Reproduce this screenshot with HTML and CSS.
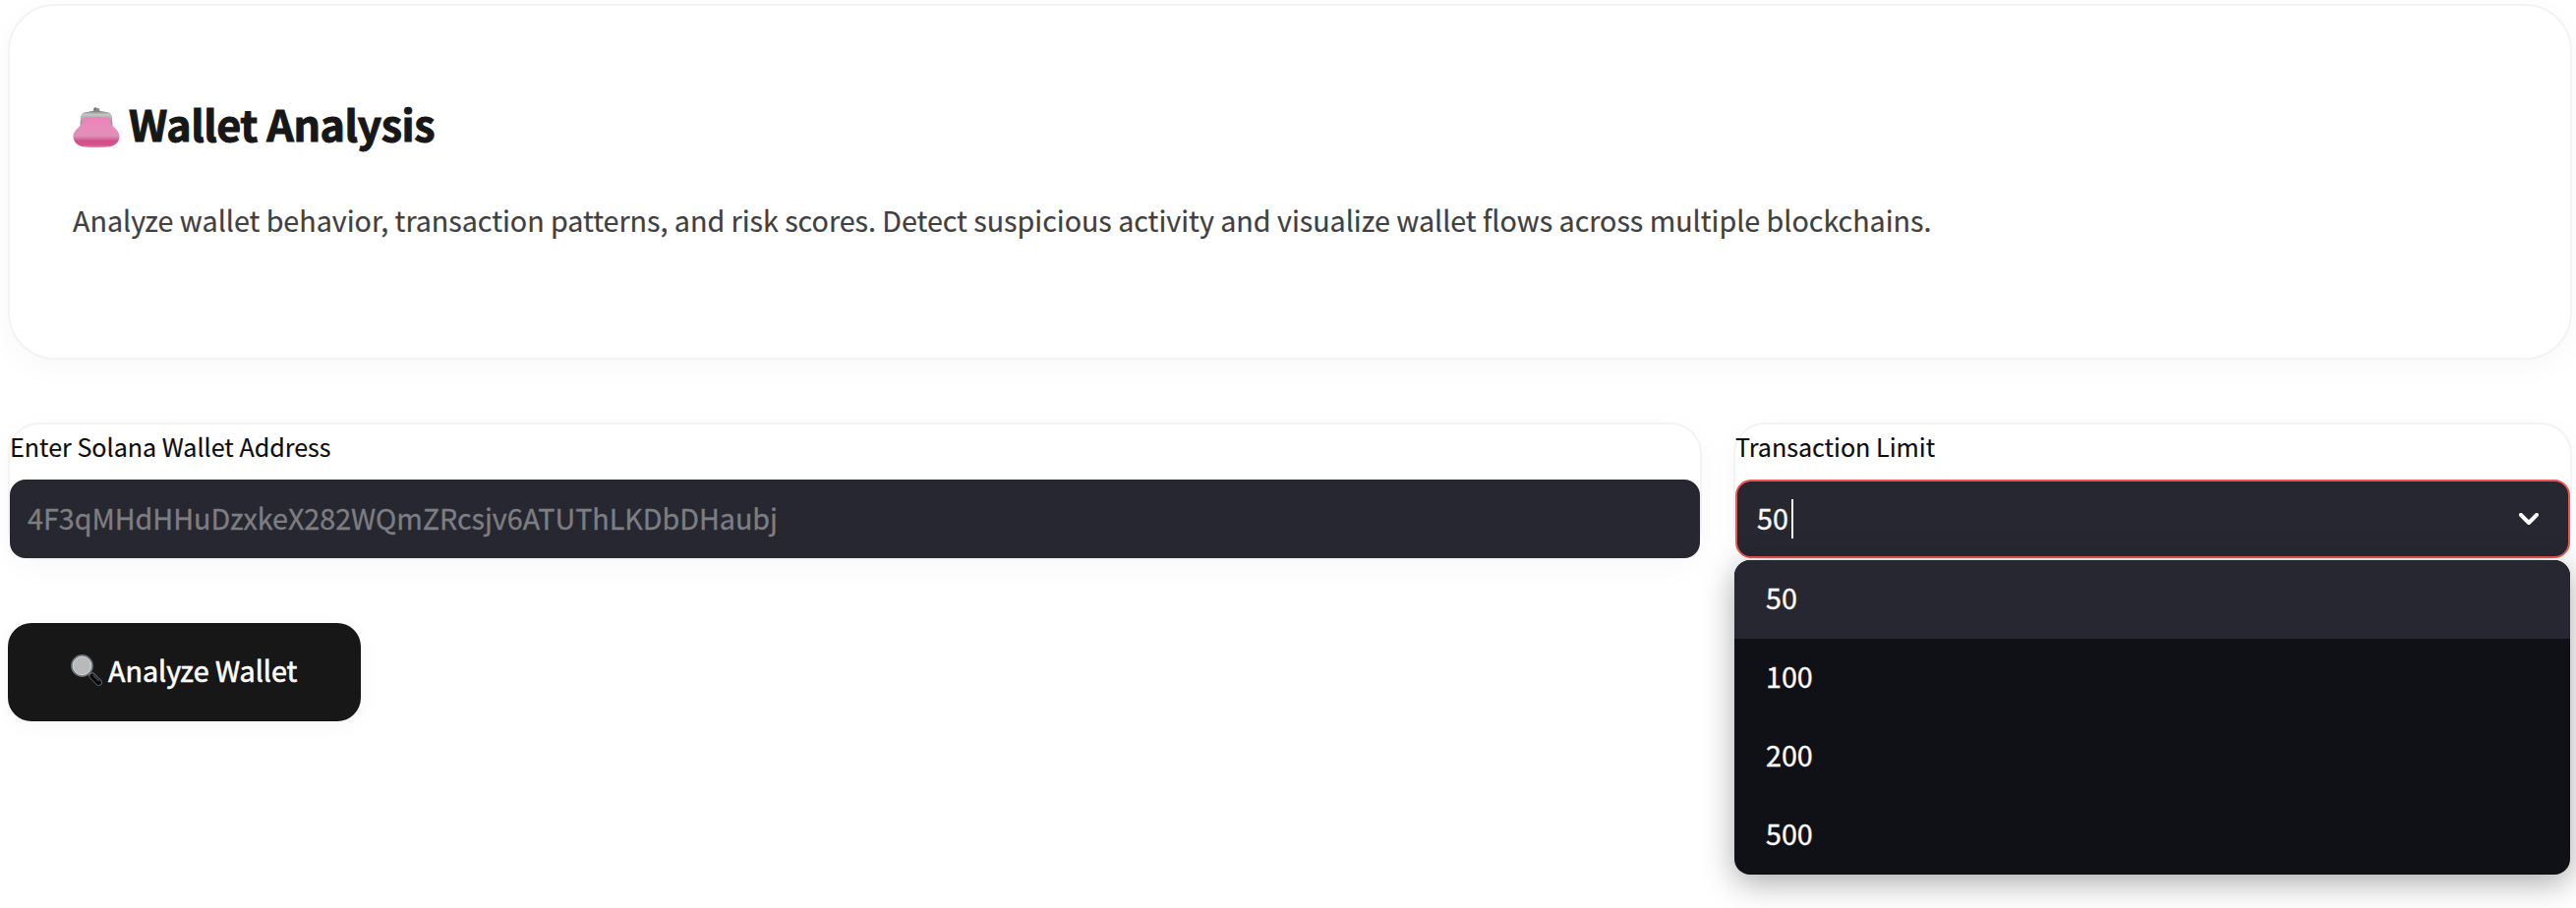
FILE: index.html
```html
<!DOCTYPE html>
<html lang="en">
<head>
<meta charset="utf-8">
<title>Wallet Analysis</title>
<link rel="stylesheet" href="styles.css">
</head>
<body>
<main class="page">
  <section class="card intro">
    <h1 class="title">
      <svg class="purse" viewBox="0 0 48 42" aria-hidden="true">
        <defs>
          <linearGradient id="metal" x1="0" y1="0" x2="0" y2="1">
            <stop offset="0" stop-color="#77777a"/><stop offset=".25" stop-color="#c4c5c5"/><stop offset="1" stop-color="#858688"/>
          </linearGradient>
          <linearGradient id="pink" x1="0" y1="0" x2="0" y2="1">
            <stop offset="0" stop-color="#f07fba"/><stop offset=".3" stop-color="#e98bba"/><stop offset=".62" stop-color="#df8fb7"/><stop offset=".78" stop-color="#cf4f87"/><stop offset=".93" stop-color="#d95590"/><stop offset="1" stop-color="#e9a3c3"/>
          </linearGradient>
        </defs>
        <path d="M7.500 19 8 10Q8.500 6 13 5.200L22 3.600 26 3.600 35 5.200Q39.500 6 40 10L40.500 19Z" fill="url(#metal)"/>
        <circle cx="23" cy="2.200" r="1.900" fill="#747477"/><circle cx="25.500" cy="3" r="1.900" fill="#8a8a8c"/>
        <path d="M11 10.500Q24 9.500 37.500 10.500C38 17 40 18.500 43 21.500 46 24.500 48 27 47.500 31 46.500 36 43 39.500 37 40.500 28 41.500 20 41.500 11 40.500 5 39.500 1.500 36 .5 31 0 27 2 24.500 5 21.500 8.500 18 10.500 16 11 10.500Z" fill="url(#pink)"/>
      </svg>
      <span>Wallet Analysis</span>
    </h1>
    <p class="description">Analyze wallet behavior, transaction patterns, and risk scores. Detect suspicious activity and visualize wallet flows across multiple blockchains.</p>
  </section>

  <form class="fields">
    <div class="card field">
      <label class="label" for="address">Enter Solana Wallet Address</label>
      <div class="control"><input class="address" id="address" type="text" placeholder="4F3qMHdHHuDzxkeX282WQmZRcsjv6ATUThLKDbDHaubj"></div>
    </div>
    <div class="card field">
      <span class="label">Transaction Limit</span>
      <div class="control select">
        <span class="value">50</span><span class="caret"></span>
        <svg class="chevron" viewBox="0 0 20 12" aria-hidden="true"><path d="M2 2 10 10 18 2"/></svg>
      </div>
      <ul class="menu">
        <li class="option selected">50</li>
        <li class="option">100</li>
        <li class="option">200</li>
        <li class="option">500</li>
      </ul>
    </div>
  </form>

  <button class="analyze" type="button">
    <svg class="magnifier" viewBox="0 0 32 32" aria-hidden="true">
      <path d="m17.500 18 4 4" stroke="#8b8d90" stroke-width="2.500"/>
      <path d="m21.800 21.800 6.700 6.700" stroke="#5c5d60" stroke-width="7" stroke-linecap="round"/>
      <path d="m22 22.200 6.300 6.300" stroke="#050607" stroke-width="5" stroke-linecap="round"/>
      <path d="m23 21.300 5.200 5.200" stroke="#454a52" stroke-width="1.400" stroke-linecap="round"/>
      <circle cx="11.500" cy="11.500" r="10.400" fill="#b9b9b9" stroke="#69747c" stroke-width="2"/>
      <circle cx="11.500" cy="11.500" r="9.300" fill="none" stroke="#d2d4d5" stroke-width="1"/>
    </svg>
    <span>Analyze Wallet</span>
  </button>
</main>
</body>
</html>
```
FILE: styles.css
```css
* { box-sizing: border-box; }

body {
  margin: 0;
  background: #fff;
  color: #171717;
  font-family: "Noto Sans CJK SC", "Noto Sans", sans-serif;
  font-size: 28.66px;
  -webkit-text-stroke: .35px currentColor;
}

.page {
  display: flex;
  flex-direction: column;
  align-items: stretch;
  height: 924px;
  padding: 4px 4px 0 8px;
  overflow: hidden;
}

.card {
  background: #fff;
  border: 2px solid #f3f3f3;
  box-shadow: 0 8px 32px rgba(0, 0, 0, .03);
}

.intro {
  height: 362px;
  padding: 90px 64px 0;
  border-radius: 48px;
}

.title {
  display: flex;
  align-items: center;
  gap: 9px;
  height: 58px;
  margin: 0;
  font-size: 43px;
  font-weight: 700;
  letter-spacing: -.46px;
  line-height: 58px;
  -webkit-text-stroke-width: 1px;
}

.purse { width: 48px; height: 42px; margin-top: 9px; }

.description {
  margin: 43px 0 0;
  color: #404040;
  font-size: 28.65px;
  line-height: 54px;
  white-space: nowrap;
  -webkit-text-stroke-width: .2px;
}

.fields {
  display: grid;
  grid-template-columns: 1723px 853px;
  gap: 32px;
  margin-top: 64px;
}

.field {
  position: relative;
  height: 140px;
  border-radius: 32px;
}

.label {
  display: block;
  height: 56px;
  color: #0c0c0c;
  font-size: 25.08px;
  line-height: 45px;
  -webkit-text-stroke-width: .15px;
}

.control {
  display: flex;
  align-items: center;
  height: 80px;
  border: 2px solid #262730;
  border-radius: 16px;
  background: #262730;
  color: #fafafa;
}

.address {
  width: 100%;
  padding: 0 16px 3px;
  border: 0;
  outline: 0;
  background: transparent;
  color: inherit;
  font: inherit;
}

.address::placeholder { color: #7d7d82; opacity: 1; }

.select { padding: 0 30px 0 20px; border-color: #ee5451; }

.value { padding-bottom: 3px; }

.caret { width: 2px; height: 40px; margin-left: 3px; background: #fff; }

.chevron {
  width: 20px;
  height: 12px;
  margin-left: auto;
  fill: none;
  stroke: #fff;
  stroke-width: 4;
  stroke-linecap: round;
  stroke-linejoin: round;
}

.menu {
  position: absolute;
  z-index: 1;
  top: 138px;
  left: -1px;
  right: 0;
  margin: 0;
  padding: 0;
  overflow: hidden;
  border-radius: 16px;
  background: #0f1116;
  box-shadow: 0 8px 32px rgba(0, 0, 0, .34);
  color: #fafafa;
  list-style: none;
}

.option { height: 80px; padding: 0 32px; line-height: 75px; }

.selected { background: #262730; }

.analyze {
  display: flex;
  align-items: center;
  align-self: flex-start;
  gap: 6px;
  width: 359px;
  height: 100px;
  margin-top: 64px;
  padding: 0 64px 5px;
  border: 0;
  border-radius: 24px;
  background: #171717;
  box-shadow: 0 4px 24px rgba(0, 0, 0, .04);
  color: #fff;
  font: 400 28.66px "Noto Sans CJK SC", "Noto Sans", sans-serif;
  white-space: nowrap;
  -webkit-text-stroke: .6px currentColor;
}

.magnifier { flex: none; width: 32px; height: 32px; fill: none; }
```
